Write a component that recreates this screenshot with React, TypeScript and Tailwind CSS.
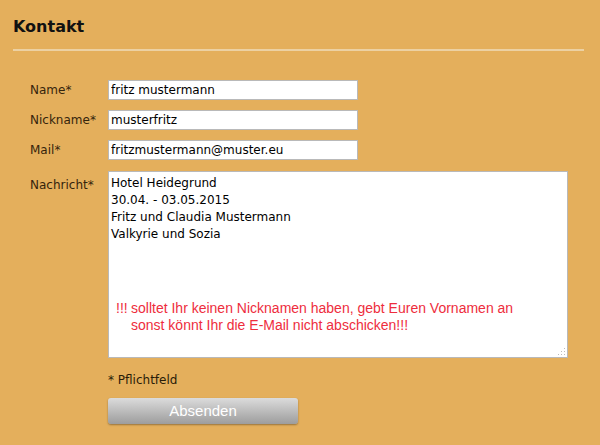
import React from 'react'

const FIELDS = [
  { label: 'Name*', value: 'fritz mustermann' },
  { label: 'Nickname*', value: 'musterfritz' },
  { label: 'Mail*', value: 'fritzmustermann@muster.eu' },
]

export default function App() {
  return (
    <div className="w-[600px] h-[445px] bg-[#e4af5c] px-[13px] pt-[17px] font-['DejaVu_Sans',Verdana,sans-serif] text-[12px] overflow-hidden">
      <h2 className="text-[16px] font-bold text-[#111] leading-[20px]">Kontakt</h2>
      <div className="mt-[12px] h-[2px] bg-[#ecd1a3] w-[571px]" />

      <div className="mt-[29px] pl-[17px] flex flex-col">
        {FIELDS.map((f) => (
          <div key={f.label} className="flex items-center h-[20px] mb-[10px]">
            <label className="w-[78px] text-[#35240c]">{f.label}</label>
            <input
              readOnly
              value={f.value}
              className="w-[250px] h-[20px] bg-white border border-[#b9b9b9] px-[2px] text-[12px] text-black outline-none"
            />
          </div>
        ))}

        <div className="flex items-start mt-[1px]">
          <label className="w-[78px] text-[#35240c] pt-[5px]">Nachricht*</label>
          <div className="relative w-[460px] h-[187px] bg-white border border-[#b9b9b9] px-[2px] pt-[3px] text-black leading-[17px]">
            <div>Hotel Heidegrund</div>
            <div>30.04. - 03.05.2015</div>
            <div>Fritz und Claudia Mustermann</div>
            <div>Valkyrie und Sozia</div>
            <div className="absolute left-[7px] top-[128px] flex font-['Liberation_Sans',Arial,sans-serif] text-[14px] leading-[17px] text-[#ee2d3d]">
              <span className="w-[15px]">!!!</span>
              <span>
                solltet Ihr keinen Nicknamen haben, gebt Euren Vornamen an
                <br />
                sonst könnt Ihr die E-Mail nicht abschicken!!!
              </span>
            </div>
            <svg className="absolute right-[1px] bottom-[1px]" width="9" height="9" viewBox="0 0 9 9">
              <rect x="7" y="1" width="1" height="1" fill="#bbb" />
              <rect x="4" y="4" width="1" height="1" fill="#bbb" />
              <rect x="7" y="4" width="1" height="1" fill="#bbb" />
              <rect x="1" y="7" width="1" height="1" fill="#bbb" />
              <rect x="4" y="7" width="1" height="1" fill="#bbb" />
              <rect x="7" y="7" width="1" height="1" fill="#bbb" />
            </svg>
          </div>
        </div>

        <div className="pl-[78px] mt-[15px] text-[#2a1c08] leading-[15px]">* Pflichtfeld</div>

        <div className="pl-[78px] mt-[10px]">
          <button
            type="button"
            className="w-[190px] h-[26px] rounded-[3px] bg-gradient-to-b from-[#dcdcdc] to-[#9d9d9d] shadow-[0_1px_2px_rgba(0,0,0,0.35)] text-white text-[15px] font-['Liberation_Sans',Arial,sans-serif]"
          >
            Absenden
          </button>
        </div>
      </div>
    </div>
  )
}
